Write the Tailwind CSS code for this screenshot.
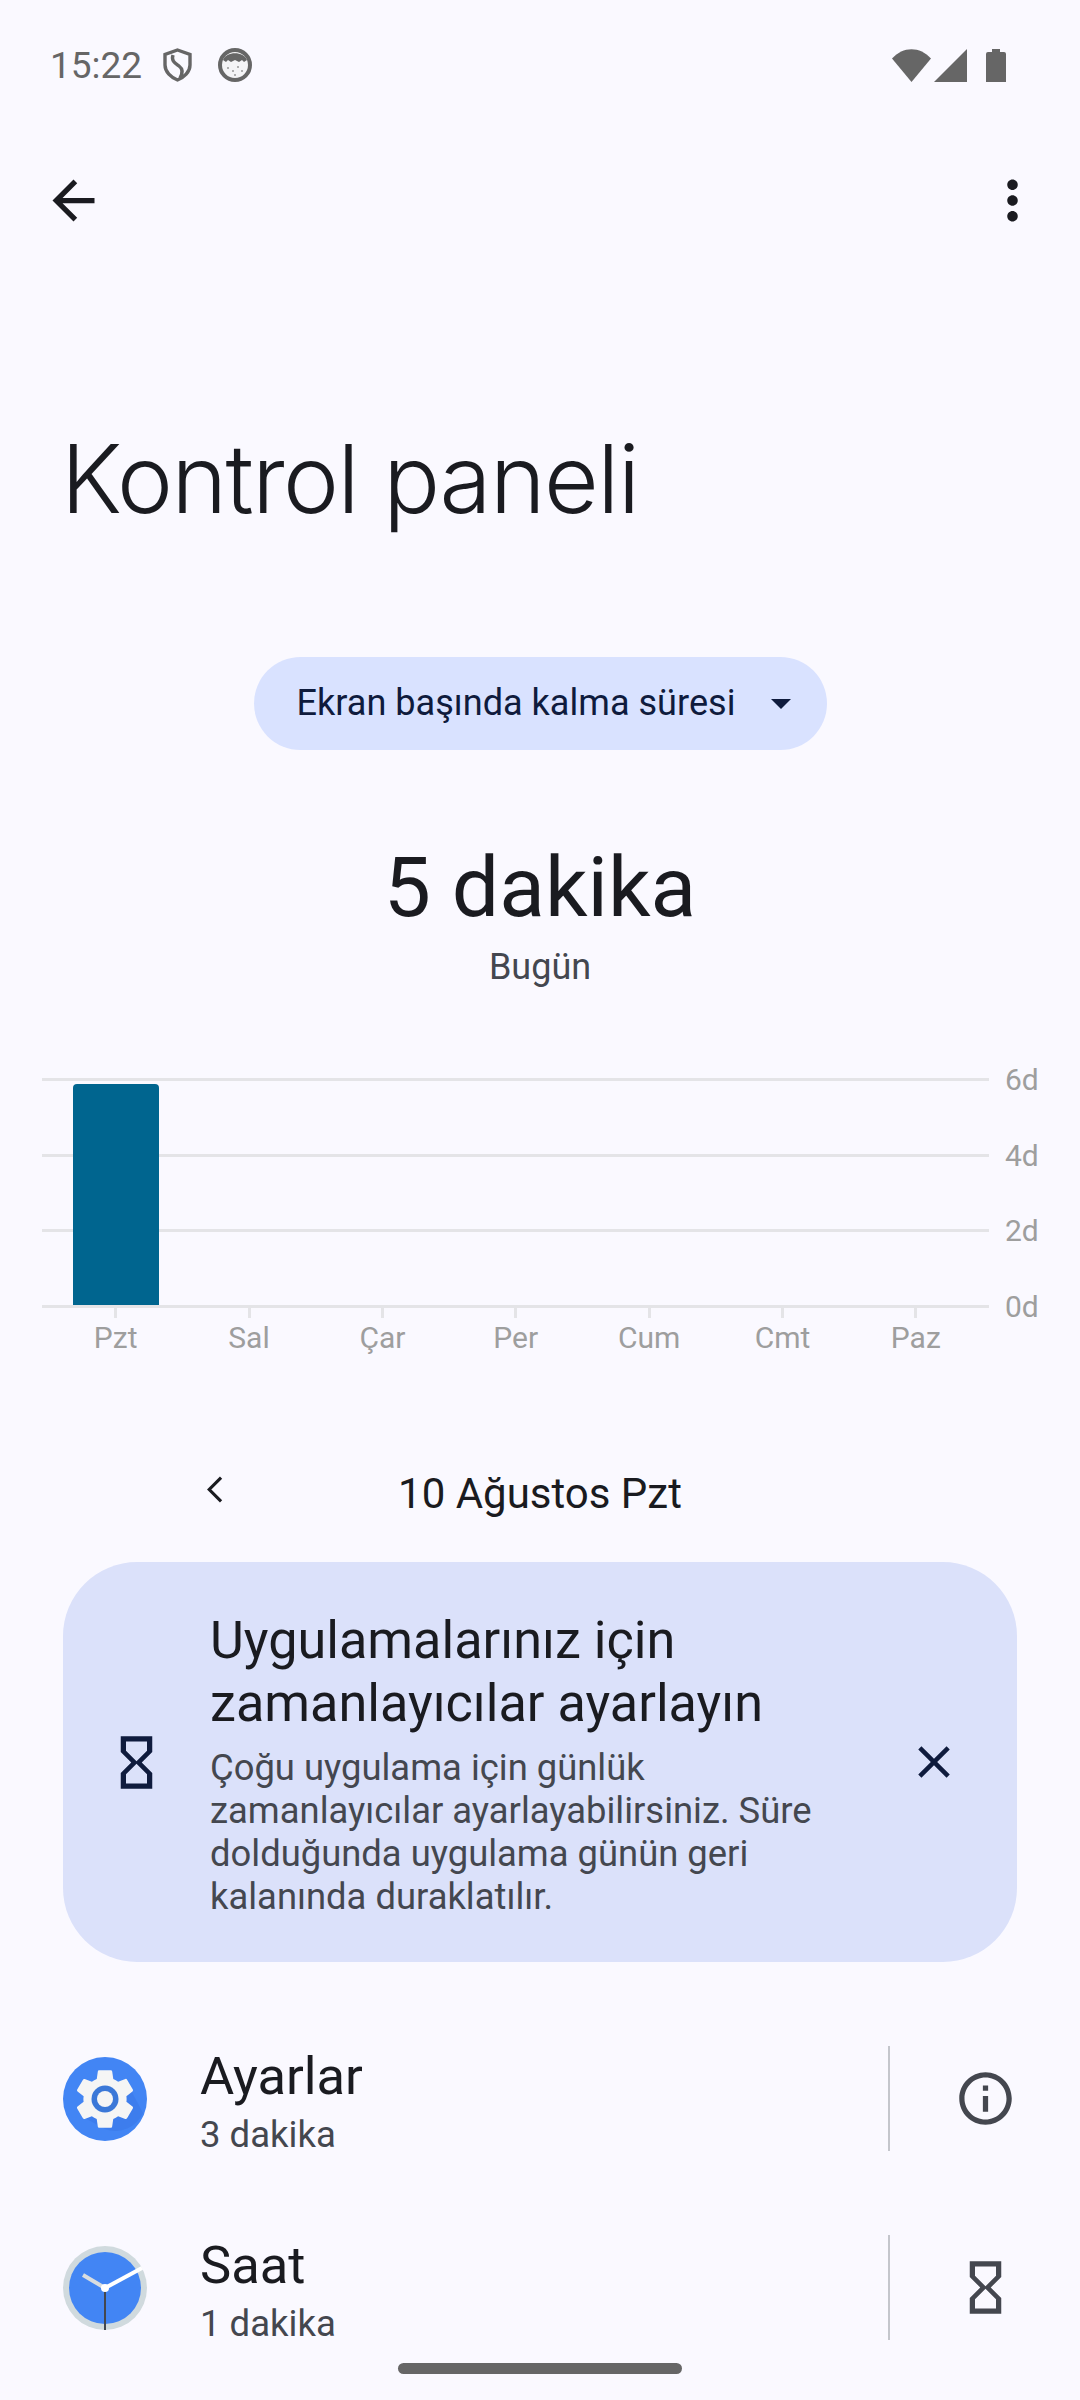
<!DOCTYPE html>
<html lang="tr">
<head>
    <meta charset="UTF-8">
    <meta name="viewport" content="width=device-width, initial-scale=1.0">
    <title>Kontrol paneli</title>
    <script src="https://cdn.jsdelivr.net/npm/@tailwindcss/browser@4"></script>
</head>
<body class="bg-[#faf9ff] font-['Roboto',sans-serif] text-[#1a1b20]">
<div class="relative w-[1080px] h-[2400px] overflow-hidden">

    <!-- status bar -->
    <div class="h-[130px] flex items-center pl-[50px] pr-[74px] text-[#666666]">
        <span class="text-[37px] leading-none w-[113px]">15:22</span>
        <svg class="w-[29px] h-[34px]" viewBox="0 0 29 34" fill="none" stroke="#666666" stroke-width="3.4"><path d="M14.500 2 L27 6.500 V17 C27 24 21 29.500 14.500 32 C8 29.500 2 24 2 17 V6.500 Z"/><path d="M10 7 C8 13 12 15 16 18 C20 21 20 25 17 30"/></svg>
        <svg class="w-[34px] h-[34px] ml-[26px]" viewBox="0 0 34 34"><circle cx="17" cy="17" r="15" fill="#f4f4f6" stroke="#666666" stroke-width="4"/><path d="M5 12 C8 3 26 3 29 12 L26 14 L24 12 L21 14 L17 12 L13 14 L10 12 L8 14 Z" fill="#666666"/><circle cx="10" cy="20" r="1" fill="#999999"/><circle cx="15" cy="23" r="1" fill="#999999"/><circle cx="20" cy="19" r="1" fill="#999999"/><circle cx="24" cy="23" r="1" fill="#999999"/><circle cx="17" cy="27" r="1" fill="#999999"/></svg>
        <div class="ml-auto flex items-center">
            <svg class="w-[39px] h-[33px]" viewBox="0 0 39 33"><path d="M0 9.500 C11 -3 28 -3 39 9.500 L19.500 33 Z" fill="#666666"/></svg>
            <svg class="w-[33px] h-[33px] ml-[3px]" viewBox="0 0 33 33"><path d="M33 0 V33 H0 Z" fill="#666666"/></svg>
            <svg class="w-[20px] h-[33px] ml-[19px]" viewBox="0 0 20 33"><path d="M6 0 H14 V3 H18 Q20 3 20 5 V33 H0 V5 Q0 3 2 3 H6 Z" fill="#666666"/></svg>
        </div>
    </div>

    <!-- app bar -->
    <div class="h-[141px] flex items-center justify-between pl-[42px] pr-[36px]">
        <svg class="w-[63px] h-[63px]" viewBox="0 0 24 24" fill="#1a1b20"><path d="M20 11H7.830l5.590-5.590L12 4l-8 8 8 8 1.410-1.410L7.830 13H20v-2z"/></svg>
        <svg class="w-[63px] h-[63px]" viewBox="0 0 24 24" fill="#1a1b20"><path d="M12 8c1.100 0 2-.9 2-2s-.9-2-2-2-2 .9-2 2 .9 2 2 2zm0 2c-1.100 0-2 .9-2 2s.9 2 2 2 2-.9 2-2-.9-2-2-2zm0 6c-1.100 0-2 .9-2 2s.9 2 2 2 2-.9 2-2-.9-2-2-2z"/></svg>
    </div>

    <!-- title -->
    <h1 class="h-[386px] pt-[158px] pl-[61px] font-['Inter',sans-serif] font-light text-[94.500px] leading-[100px] tracking-[-1.500px] whitespace-nowrap">Kontrol paneli</h1>

    <!-- spinner -->
    <div class="h-[93px] flex justify-center">
        <div class="w-[573px] rounded-full bg-[#d9e2ff] flex items-center pl-[43px] text-[#0f1b3d] text-[36.100px]">
            <span>Ekran başında kalma süresi</span>
            <span class="ml-[36px] w-0 h-0 border-x-[10px] border-x-transparent border-t-[10px] border-t-[#0f1b3d]"></span>
        </div>
    </div>

    <!-- total -->
    <div class="mt-[88px] text-center">
        <div class="text-[84px] leading-[100px]">5 dakika</div>
        <div class="mt-[6px] text-[36px] leading-[46px] text-[#44474f]">Bugün</div>
    </div>

    <!-- chart -->
    <div class="relative mt-[88px] h-[300px] ml-[42px] w-[1000px]">
        <div class="absolute left-[31px] top-[6px] w-[86px] h-[221px] bg-[#00658f] rounded-t-[4px]"></div>
        <div class="flex items-center h-[3px] gap-[16px]"><div class="w-[947px] h-[3px] bg-[#e4e4e7]"></div><span class="text-[30px] text-[#9e9e9e]">6d</span></div>
        <div class="flex items-center h-[3px] gap-[16px] mt-[73px]"><div class="w-[947px] h-[3px] bg-[#e4e4e7]"></div><span class="text-[30px] text-[#9e9e9e]">4d</span></div>
        <div class="flex items-center h-[3px] gap-[16px] mt-[72px]"><div class="w-[947px] h-[3px] bg-[#e4e4e7]"></div><span class="text-[30px] text-[#9e9e9e]">2d</span></div>
        <div class="flex items-center h-[3px] gap-[16px] mt-[73px]"><div class="w-[947px] h-[3px] bg-[#e4e4e7]"></div><span class="text-[30px] text-[#9e9e9e]">0d</span></div>
        <div class="grid grid-cols-7 w-[933.500px] ml-[7px] text-center text-[30px] leading-[40px] text-[#9e9e9e]">
            <div class="flex flex-col items-center"><i class="w-[3px] h-[10px] bg-[#e4e4e7]"></i><span>Pzt</span></div>
            <div class="flex flex-col items-center"><i class="w-[3px] h-[10px] bg-[#e4e4e7]"></i><span>Sal</span></div>
            <div class="flex flex-col items-center"><i class="w-[3px] h-[10px] bg-[#e4e4e7]"></i><span>Çar</span></div>
            <div class="flex flex-col items-center"><i class="w-[3px] h-[10px] bg-[#e4e4e7]"></i><span>Per</span></div>
            <div class="flex flex-col items-center"><i class="w-[3px] h-[10px] bg-[#e4e4e7]"></i><span>Cum</span></div>
            <div class="flex flex-col items-center"><i class="w-[3px] h-[10px] bg-[#e4e4e7]"></i><span>Cmt</span></div>
            <div class="flex flex-col items-center"><i class="w-[3px] h-[10px] bg-[#e4e4e7]"></i><span>Paz</span></div>
        </div>
    </div>

    <!-- date -->
    <div class="relative mt-[85px] h-[60px] flex items-center justify-center text-[42px]">
        <svg class="absolute left-[183px] top-[-5px] w-[63px] h-[63px]" viewBox="0 0 24 24" fill="none" stroke="#1a1b20" stroke-width="1.200"><path d="M14.500 7.500 L10 12 L14.500 16.500"/></svg>
        <span>10 Ağustos Pzt</span>
    </div>

    <!-- tip card -->
    <div class="mt-[39px] mx-[63px] h-[400px] rounded-[74px] bg-[#dbe1fa] flex items-center">
        <div class="w-[147px] flex-none flex justify-center">
            <svg class="w-[63px] h-[63px]" viewBox="0 0 24 24" fill="#0f1b3d"><path d="M6 2v6h.010L6 8.010 10 12l-4 4 .010.010H6V22h12v-5.990h-.010L18 16l-4-4 4-3.990-.010-.010H18V2H6zm10 14.500V20H8v-3.500l4-4 4 4zm-4-5l-4-4V4h8v3.500l-4 4z"/></svg>
        </div>
        <div class="w-[640px] flex-none pt-[3px]">
            <div class="text-[52.200px] leading-[63px] whitespace-nowrap">Uygulamalarınız için<br>zamanlayıcılar ayarlayın</div>
            <div class="mt-[11px] text-[36.400px] leading-[43px] text-[#44474f] whitespace-nowrap">Çoğu uygulama için günlük<br>zamanlayıcılar ayarlayabilirsiniz. Süre<br>dolduğunda uygulama günün geri<br>kalanında duraklatılır.</div>
        </div>
        <svg class="w-[54px] h-[54px] ml-[57px]" viewBox="0 0 24 24" fill="#0f1b3d"><path d="M19 6.410L17.590 5 12 10.590 6.410 5 5 6.410 10.590 12 5 17.590 6.410 19 12 13.410 17.590 19 19 17.590 13.410 12z"/></svg>
    </div>

    <!-- app list -->
    <div class="mt-[84px] pl-[63px]">
        <div class="h-[105px] flex items-center">
            <svg class="w-[84px] h-[84px] flex-none" viewBox="0 0 84 84">
                <circle cx="42" cy="42" r="42" fill="#4285f4"/>
                <path d="M42 72 A30 30 0 0 0 80 56 L62 22 L20 60 Z" fill="#3b78e7" opacity="0.6"/>
                <g transform="translate(42 42) scale(3) translate(-12 -12)"><path fill="#f5f5f5" d="M19.140 12.940c.04-.3.06-.61.06-.94 0-.32-.02-.64-.07-.94l2.030-1.580a.49.49 0 0 0 .12-.61l-1.920-3.320a.488.488 0 0 0-.59-.22l-2.390.96c-.5-.38-1.030-.7-1.620-.94l-.36-2.540a.484.484 0 0 0-.48-.41h-3.840c-.24 0-.43.17-.47.41l-.36 2.540c-.59.24-1.130.57-1.620.94l-2.390-.96c-.22-.08-.47 0-.59.22L2.740 8.870c-.12.21-.08.47.12.61l2.030 1.580c-.05.3-.09.63-.09.94s.02.64.07.94l-2.030 1.580a.49.49 0 0 0-.12.61l1.920 3.320c.12.22.37.29.59.22l2.390-.96c.5.38 1.030.7 1.620.94l.36 2.540c.05.24.24.41.48.41h3.840c.24 0 .44-.17.47-.41l.36-2.540c.59-.24 1.130-.56 1.620-.94l2.390.96c.22.08.47 0 .59-.22l1.920-3.320c.12-.22.07-.47-.12-.61l-2.010-1.580z"/></g>
                <circle cx="42" cy="42" r="13.500" fill="#3b78d8"/>
                <circle cx="42" cy="42" r="8" fill="#f5f5f5"/>
            </svg>
            <div class="ml-[53px] w-[688px] flex-none pt-[4px]">
                <div class="text-[52.500px] leading-[60px]">Ayarlar</div>
                <div class="text-[36.500px] leading-[42px] mt-[8px] text-[#44474f]">3 dakika</div>
            </div>
            <div class="w-[2px] h-[105px] bg-[#c4c6cc]"></div>
            <svg class="ml-[64px] w-[63px] h-[63px]" viewBox="0 0 24 24" fill="#44474f"><path d="M11 7h2v2h-2zm0 4h2v6h-2zm1-9C6.480 2 2 6.480 2 12s4.480 10 10 10 10-4.480 10-10S17.520 2 12 2zm0 18c-4.410 0-8-3.590-8-8s3.590-8 8-8 8 3.590 8 8-3.590 8-8 8z"/></svg>
        </div>
        <div class="mt-[84px] h-[105px] flex items-center">
            <svg class="w-[84px] h-[84px] flex-none" viewBox="0 0 84 84">
                <circle cx="42" cy="42" r="42" fill="#d0dade"/>
                <circle cx="42" cy="42" r="36" fill="#4285f4"/>
                <path d="M42 42 V84" stroke="#44474f" stroke-width="2"/>
                <path d="M42 42 L20 29" stroke="#d9dde0" stroke-width="4"/>
                <path d="M42 42 L79 22" stroke="#ffffff" stroke-width="4"/>
                <circle cx="42" cy="42" r="4" fill="#ffffff"/>
            </svg>
            <div class="ml-[53px] w-[688px] flex-none pt-[4px]">
                <div class="text-[52.500px] leading-[60px]">Saat</div>
                <div class="text-[36.500px] leading-[42px] mt-[8px] text-[#44474f]">1 dakika</div>
            </div>
            <div class="w-[2px] h-[105px] bg-[#c4c6cc]"></div>
            <svg class="ml-[64px] w-[63px] h-[63px]" viewBox="0 0 24 24" fill="#44474f"><path d="M6 2v6h.010L6 8.010 10 12l-4 4 .010.010H6V22h12v-5.990h-.010L18 16l-4-4 4-3.990-.010-.010H18V2H6zm10 14.500V20H8v-3.500l4-4 4 4zm-4-5l-4-4V4h8v3.500l-4 4z"/></svg>
        </div>
    </div>

    <!-- gesture bar -->
    <div class="absolute left-[398px] top-[2363px] w-[284px] h-[11px] rounded-full bg-[#666666]"></div>
</div>
</body>
</html>
